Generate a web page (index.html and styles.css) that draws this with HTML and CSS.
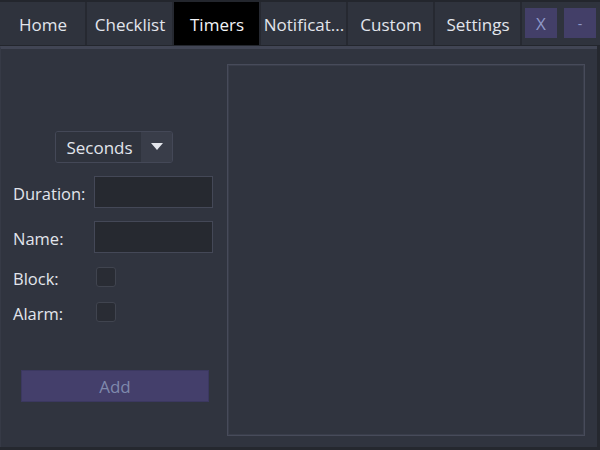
FILE: index.html
```html
<!DOCTYPE html>
<html>
<head>
<meta charset="utf-8">
<link rel="stylesheet" href="styles.css">
</head>
<body>
<div class="app">
  <div class="tabbar">
    <div class="tab">Home</div>
    <div class="tab">Checklist</div>
    <div class="tab active">Timers</div>
    <div class="tab">Notificat...</div>
    <div class="tab">Custom</div>
    <div class="tab">Settings</div>
    <div class="winbtn wb-x">X</div>
    <div class="winbtn wb-min">-</div>
  </div>
  <div class="panel">
    <div class="leftcol">
      <div class="dropdown">
        <span class="dd-label">Seconds</span>
        <span class="dd-arrow"><svg width="12" height="8" viewBox="0 0 12 8"><path d="M0 0H12L6 7Z" fill="#e4e6ec"/></svg></span>
      </div>
      <div class="row row-duration">
        <span class="label">Duration:</span>
        <div class="input"></div>
      </div>
      <div class="row row-name">
        <span class="label">Name:</span>
        <div class="input"></div>
      </div>
      <div class="row row-check row-block">
        <span class="label">Block:</span>
        <div class="checkbox"></div>
      </div>
      <div class="row row-check row-alarm">
        <span class="label">Alarm:</span>
        <div class="checkbox"></div>
      </div>
      <div class="addbtn">Add</div>
    </div>
    <div class="listbox"></div>
  </div>
</div>
</body>
</html>
```
FILE: styles.css
```css
html, body {
  margin: 0;
  padding: 0;
  background: #25282f;
}
.app {
  width: 600px;
  height: 450px;
  overflow: hidden;
  font-family: "Open Sans", "Noto Sans", sans-serif;
  font-size: 16px;
  color: #e2e5ec;
}
.tabbar {
  display: flex;
  align-items: stretch;
  height: 43px;
  border-top: 2px solid #23262d;
  border-bottom: 1px solid #23262d;
  background: #2f333d;
}
.tab {
  width: 87px;
  border-right: 2px solid #262931;
  display: flex;
  align-items: center;
  justify-content: center;
  white-space: nowrap;
  box-sizing: border-box;
  font-size: 17px;
  padding-top: 1px;
  padding-left: 1px;
}
.tab.active {
  background: #000;
  color: #f2f4f8;
}
.winbtn {
  width: 32px;
  height: 30px;
  margin-top: 6px;
  background: #433f68;
  display: flex;
  align-items: center;
  justify-content: center;
  color: #8e98c8;
  font-size: 17px;
}
.wb-x { margin-left: 3px; }
.wb-min { margin-left: 7px; font-size: 14px; }
.panel {
  display: flex;
  width: 597px;
  height: 401px;
  background: #30343f;
  border-top: 3px solid #414554;
  border-left: 1px solid #363a46;
  box-sizing: border-box;
}
.leftcol {
  width: 225px;
  padding-left: 12px;
  box-sizing: border-box;
  display: flex;
  flex-direction: column;
}
.dropdown {
  margin-top: 82px;
  margin-left: 42px;
  width: 118px;
  height: 32px;
  box-sizing: border-box;
  border: 1px solid #444857;
  border-radius: 3px;
  display: flex;
  overflow: hidden;
}
.dd-label {
  flex: 1;
  display: flex;
  align-items: center;
  justify-content: center;
  background: #2f333d;
  font-size: 17px;
  padding-left: 2px;
}
.dd-arrow {
  width: 31px;
  background: #393d49;
  display: flex;
  align-items: center;
  justify-content: center;
}
.row {
  display: flex;
  align-items: center;
}
.label {
  width: 81px;
  font-size: 16.5px;
  padding-top: 3px;
}
.row-duration { margin-top: 13px; height: 32px; }
.row-name { margin-top: 13px; height: 32px; }
.row-block { margin-top: 14px; height: 20px; }
.row-alarm { margin-top: 15px; height: 20px; }
.input {
  width: 119px;
  height: 32px;
  box-sizing: border-box;
  background: #262930;
  border: 1px solid #444857;
}
.checkbox {
  width: 20px;
  height: 20px;
  margin-left: 2px;
  box-sizing: border-box;
  background: #292c34;
  border: 1px solid #40444f;
  border-radius: 3px;
}
.addbtn {
  margin-top: 48px;
  margin-left: 8px;
  width: 188px;
  height: 32px;
  box-sizing: border-box;
  background: #443f6b;
  border: 1px solid #3b3860;
  display: flex;
  align-items: center;
  justify-content: center;
  color: #7f89ad;
  font-size: 17px;
}
.listbox {
  margin-top: 15px;
  margin-left: 1px;
  width: 358px;
  height: 372px;
  box-sizing: border-box;
  border: 1px solid #474b5a;
  box-shadow: inset 0 0 0 1px #393d4a;
}
```
